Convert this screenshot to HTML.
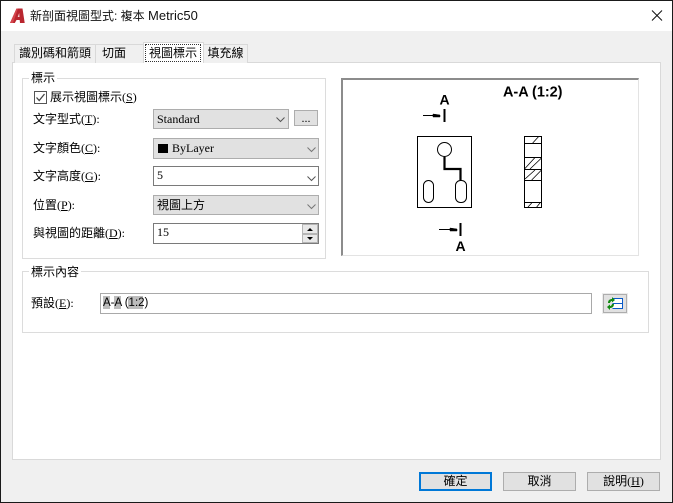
<!DOCTYPE html>
<html><head><meta charset="utf-8">
<style>
html,body{margin:0;padding:0;background:#fff}
#w{position:relative;width:673px;height:503px;overflow:hidden;background:#f0f0f0;font:12px/14px "Liberation Serif","WenQuanYi Zen Hei","Noto Sans CJK TC",serif;color:#000}
#w div,#w span.a{position:absolute;box-sizing:border-box}
.t{white-space:nowrap}
.tab{background:#f0f0f0;border:1px solid #d9d9d9;border-bottom:none;text-align:center;line-height:17px;white-space:nowrap}
.grp{border:1px solid #dcdcdc}
.lg{background:#fff;padding:0 2px;white-space:nowrap;line-height:14px}
.cb{background:#e1e1e1;border:1px solid #adadad;line-height:18px;padding-left:3px;white-space:nowrap}
.inp{background:#fff;border:1px solid #7a7a7a;line-height:17px;padding-left:3px;white-space:nowrap}
.btn{background:#e1e1e1;border:1px solid #adadad;text-align:center;line-height:17px;white-space:nowrap}
u{text-decoration:underline}
svg{position:absolute;overflow:visible}
</style></head><body>
<div id="w">
<div style="left:0;top:0;width:673px;height:31px;background:#fff"></div>
<svg style="left:10px;top:8px" width="16" height="16" viewBox="0 0 16 16"><path d="M0 15 L6.500 .5 L12.500 .5 L14.700 15 L10 15 L9.700 12 L6.500 12 L4.800 15Z" fill="#b9262f"/><path d="M7.700 9 L9.200 5 L9.500 9Z" fill="#f3d5d5"/><path d="M0 15 L6.500 .5 L8 .5 L3 15Z" fill="#d4454c"/></svg>
<div class="t" style="left:30px;top:9px;font-family:'Liberation Sans','Noto Sans CJK TC',sans-serif;font-size:12px;color:#111">新剖面視圖型式: 複本 <span style="font-size:13px">Metric50</span></div>
<svg style="left:651px;top:10px" width="12" height="11"><path d="M1 .5L11 10.500M11 .5L1 10.500" stroke="#111" fill="none"/></svg>

<div style="left:12px;top:62px;width:649px;height:398px;background:#fff;border:1px solid #d9d9d9"></div>
<div class="tab" style="left:14px;top:44px;width:82px;height:19px">識別碼和箭頭</div>
<div class="tab" style="left:95px;top:44px;width:49px;height:19px;text-align:left;padding-left:6px">切面</div>
<div class="tab" style="left:203px;top:44px;width:45px;height:19px">填充線</div>
<div style="left:143px;top:42px;width:61px;height:21px;background:#fff;border:1px solid #d9d9d9;border-bottom:none"></div>
<div class="t" style="left:145px;top:44px;width:56px;height:18px;border:1px dotted #333;text-align:center;line-height:16px">視圖標示</div>

<div class="grp" style="left:22px;top:78px;width:304px;height:181px"></div>
<div class="lg" style="left:29px;top:71px">標示</div>
<div style="left:34px;top:91px;width:13px;height:13px;background:#fff;border:1px solid #555"></div>
<svg style="left:34px;top:91px" width="13" height="13"><path d="M2.500 6.500L5.200 9.500L10.500 3" stroke="#444" stroke-width="1.300" fill="none"/></svg>
<div class="t" style="left:50px;top:90px">展示視圖標示(<u>S</u>)</div>
<div class="t" style="left:33px;top:112px">文字型式(<u>T</u>):</div>
<div class="cb" style="left:153px;top:109px;width:136px;height:20px">Standard</div>
<svg style="left:276px;top:116.500px" width="9" height="6"><path d="M.5 .5L4.500 4.500L8.500 .5" stroke="#555" fill="none"/></svg>
<div class="btn" style="left:294px;top:110px;width:24px;height:16px;line-height:14px">...</div>

<div class="t" style="left:33px;top:141px">文字顏色(<u>C</u>):</div>
<div class="cb" style="left:153px;top:138px;width:166px;height:21px;padding-left:18px">ByLayer</div>
<div style="left:158px;top:144px;width:10px;height:9px;background:#000"></div>
<svg style="left:306.500px;top:147px" width="9" height="6"><path d="M.5 .5L4.500 4.500L8.500 .5" stroke="#777" fill="none"/></svg>

<div class="t" style="left:33px;top:169px">文字高度(<u>G</u>):</div>
<div class="inp" style="left:153px;top:166px;width:166px;height:20px">5</div>
<svg style="left:306.500px;top:176px" width="9" height="6"><path d="M.5 .5L4.500 4.500L8.500 .5" stroke="#555" fill="none"/></svg>

<div class="t" style="left:33px;top:198px">位置(<u>P</u>):</div>
<div class="cb" style="left:153px;top:195px;width:166px;height:20px">視圖上方</div>
<svg style="left:306.500px;top:204px" width="9" height="6"><path d="M.5 .5L4.500 4.500L8.500 .5" stroke="#777" fill="none"/></svg>

<div class="t" style="left:33px;top:226px">與視圖的距離(<u>D</u>):</div>
<div class="inp" style="left:153px;top:223px;width:166px;height:21px">15</div>
<div style="left:302px;top:224px;width:16px;height:10px;background:#e8e8e8;border:1px solid #b5b5b5"></div>
<div style="left:302px;top:234px;width:16px;height:9px;background:#e8e8e8;border:1px solid #b5b5b5"></div>
<svg style="left:306px;top:226px" width="8" height="14"><path d="M1 5L4 2L7 5ZM1 11L7 11L4 14Z" fill="#000"/></svg>

<div style="left:341px;top:78px;width:298px;height:178px;background:#fff;border-left:2px solid #8c8c8c;border-top:2px solid #8c8c8c;border-right:1px solid #e3e3e3;border-bottom:1px solid #e3e3e3"></div>
<svg style="left:340px;top:70px" width="310" height="190" viewBox="0 0 310 190" fill="none" stroke="#000">
<path d="M77.500 66.500H131.500V137.500H77.500Z"/>
<circle cx="104.500" cy="79.500" r="7"/>
<path d="M104.500 87V99H120.500V110" stroke-width="2.200"/>
<rect x="83.500" y="110.500" width="10" height="22" rx="5"/>
<rect x="115.500" y="110.500" width="11" height="22" rx="5"/>
<path d="M184.500 66.500H201.500V137.500H184.500ZM184.500 73.500H201.500M184.500 87.500H201.500M184.500 99.500H201.500M184.500 110.500H201.500M184.500 132.500H201.500"/>
<path d="M192.700 73L198.700 66.500M184.500 99L195 87.500M190 99L201.500 88M185 109L195 100M191.700 110L201.500 100M188 137L191.700 133M196.700 137L200 133" stroke-width=".8"/>
<path d="M83 45.500H93"/><path d="M93 44L100 45V47L93 47Z" fill="#000" stroke="#000" stroke-width=".5"/><path d="M104.500 39V52" stroke-width="2"/>
<path d="M99 159.500H110"/><path d="M110 158L117 159V161L110 161Z" fill="#000" stroke="#000" stroke-width=".5"/><path d="M120.500 153V166" stroke-width="2"/>
<text x="99.500" y="34.500" font-family="Liberation Sans" font-size="14" font-weight="700" fill="#000" stroke="none">A</text>
<text x="115.500" y="181" font-family="Liberation Sans" font-size="14" font-weight="700" fill="#000" stroke="none">A</text>
<text x="163" y="26.500" font-family="Liberation Sans" font-size="14.500" font-weight="700" fill="#000" stroke="none" textLength="59.500">A-A (1:2)</text>
</svg>

<div class="grp" style="left:22px;top:271px;width:627px;height:62px"></div>
<div class="lg" style="left:29px;top:265px">標示內容</div>
<div class="t" style="left:31px;top:296px">預設(<u>E</u>):</div>
<div class="inp" style="left:100px;top:293px;width:492px;height:21px;border:1px solid #a9a9a9"></div>
<div style="left:103px;top:296px;width:7px;height:13px;background:#bcbcbc"></div>
<div style="left:114px;top:296px;width:7px;height:13px;background:#bcbcbc"></div>
<div style="left:128px;top:296px;width:15px;height:13px;background:#bcbcbc"></div>
<div class="t" style="left:103px;top:296px;font-family:'Liberation Sans',sans-serif;font-size:11.500px">A-A (1:2)</div>
<div style="left:603px;top:294px;width:24px;height:19px;background:#e1e1e1;border:1px solid #adadad;outline:1px solid #ececec"></div>
<svg style="left:607px;top:297px" width="16" height="13"><path d="M5.500 1.500H15.500V6.500H5.500M5.500 6.500H15.500V11.500H5.500" fill="#fff" stroke="#0a5ac8"/><path d="M1 6C1 3 3 2 5 2V0L8 3L5 5.500V4C4 4 3 5 3 6ZM7 7C7 10 5 11 3 11V13L0 10L3 7.500V9C4 9 5 8 5 7Z" fill="#118a11"/></svg>

<div class="btn" style="left:419px;top:472px;width:73px;height:19px;border:2px solid #0078d7;line-height:15px">確定</div>
<div class="btn" style="left:503px;top:472px;width:73px;height:19px;line-height:16px">取消</div>
<div class="btn" style="left:587px;top:472px;width:73px;height:19px;line-height:16px">說明(<u>H</u>)</div>

<div style="left:0;top:0;width:673px;height:1px;background:#1a1a1a"></div>
<div style="left:0;top:0;width:1px;height:503px;background:#1a1a1a"></div>
<div style="left:672px;top:0;width:1px;height:503px;background:#1a1a1a"></div>
<div style="left:0;top:502px;width:673px;height:1px;background:#1a1a1a"></div>
</div>
</body></html>
